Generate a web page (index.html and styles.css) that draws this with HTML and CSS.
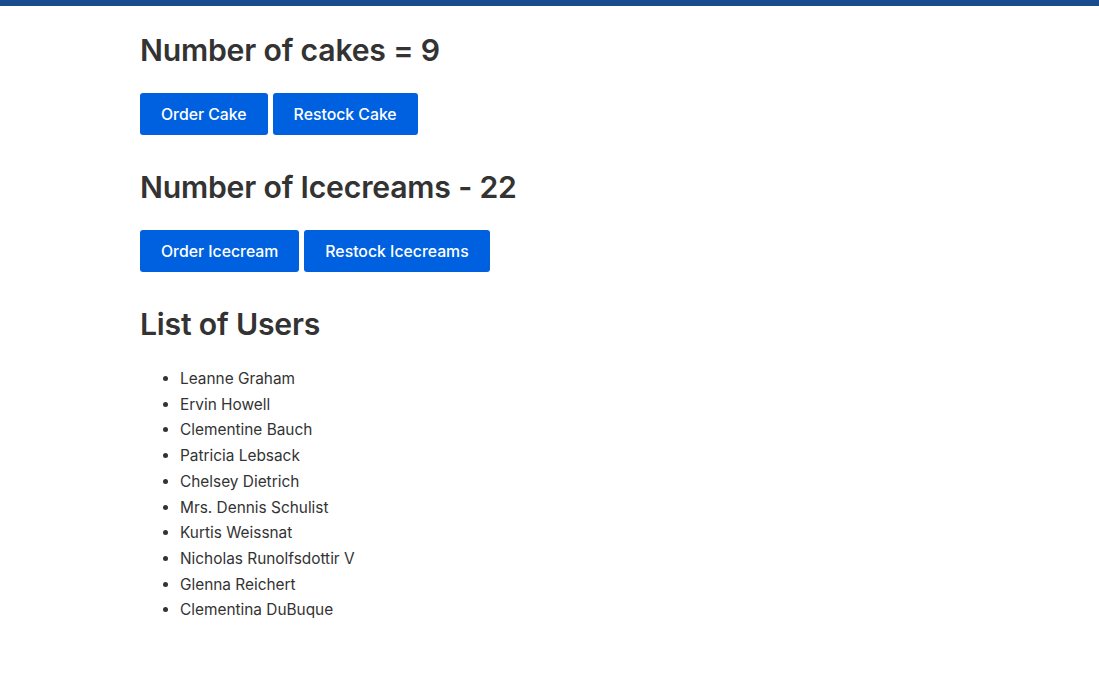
FILE: index.html
```html
<!DOCTYPE html>
<html>
<head>
<meta charset="utf-8">
<link rel="stylesheet" href="styles.css">
</head>
<body>
<div class="topbar"></div>
<main class="app">
  <section class="block">
    <h2 class="title">Number of cakes = 9</h2>
    <div class="actions">
      <button class="btn">Order Cake</button>
      <button class="btn">Restock Cake</button>
    </div>
  </section>
  <section class="block">
    <h2 class="title">Number of Icecreams - 22</h2>
    <div class="actions">
      <button class="btn">Order Icecream</button>
      <button class="btn">Restock Icecreams</button>
    </div>
  </section>
  <section class="block">
    <h2 class="title">List of Users</h2>
    <ul class="users">
      <li>Leanne Graham</li>
      <li>Ervin Howell</li>
      <li>Clementine Bauch</li>
      <li>Patricia Lebsack</li>
      <li>Chelsey Dietrich</li>
      <li>Mrs. Dennis Schulist</li>
      <li>Kurtis Weissnat</li>
      <li>Nicholas Runolfsdottir V</li>
      <li>Glenna Reichert</li>
      <li>Clementina DuBuque</li>
    </ul>
  </section>
</main>
</body>
</html>
```
FILE: styles.css
```css
html, body {
  margin: 0;
  padding: 0;
  background: #fff;
}
body {
  font-family: Inter, "Noto Sans", sans-serif;
  color: #333;
  font-size: 16px;
}
.topbar {
  height: 6px;
  background: #194a8b;
}
.app {
  padding: 0 140px;
}
.block {
  padding-top: 25px;
}
.block + .block {
  padding-top: 33px;
}
.title {
  margin: 0;
  font-size: 30.2px;
  font-weight: 600;
  line-height: 38px;
  color: #333;
  letter-spacing: -0.2px;
}
.actions {
  display: flex;
  gap: 5px;
  margin-top: 24px;
}
.btn {
  font-family: Inter, "Noto Sans", sans-serif;
  font-size: 15.8px;
  font-weight: 500;
  color: #fff;
  background: #0061e0;
  border: none;
  border-radius: 3px;
  height: 42px;
  padding: 0 21px;
  cursor: pointer;
}
.users {
  margin: 23px 0 0;
  padding-left: 40px;
  line-height: 25.7px;
  font-size: 15.4px;
  color: #333;
}
```
